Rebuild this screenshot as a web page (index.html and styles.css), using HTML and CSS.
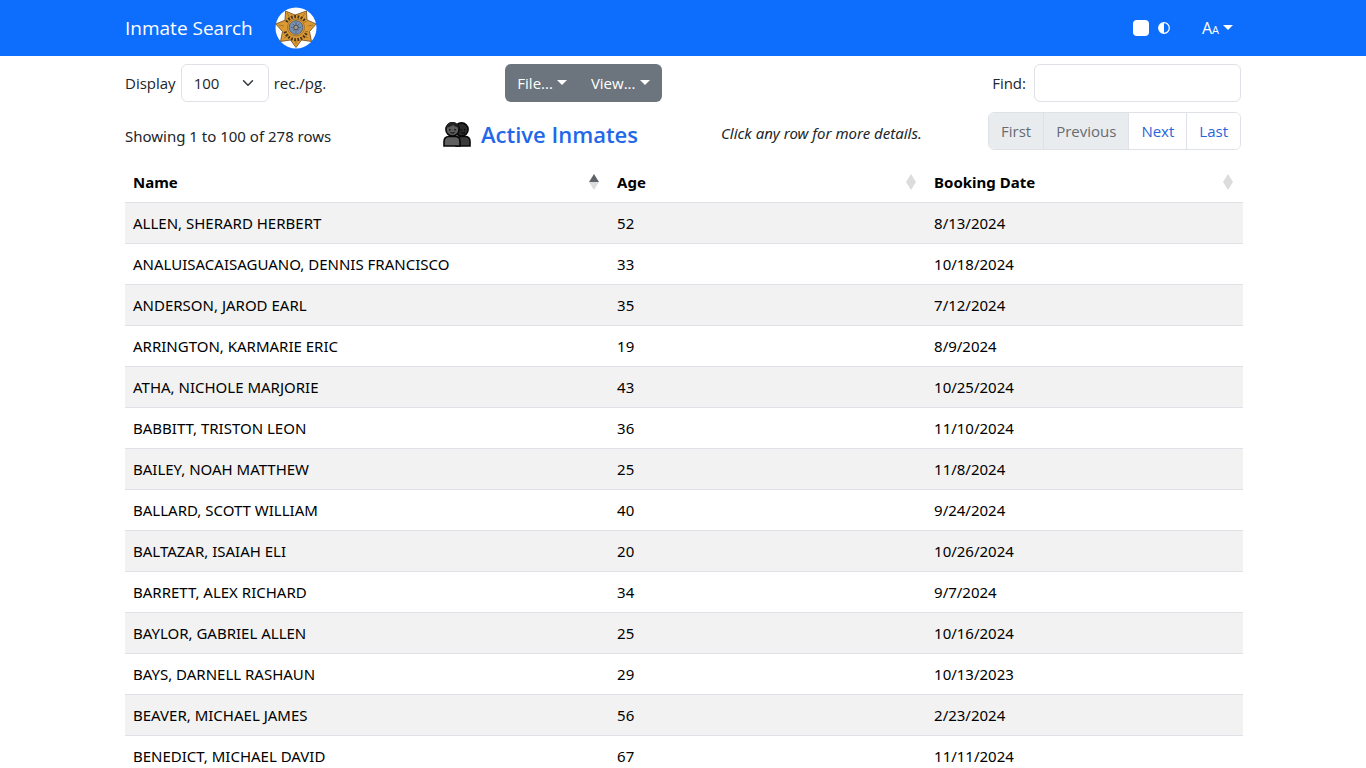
FILE: index.html
```html
<!DOCTYPE html>
<html lang="en">
<head>
<meta charset="utf-8">
<meta name="viewport" content="width=device-width, initial-scale=1">
<title>Inmate Search</title>
<link rel="stylesheet" href="styles.css">
</head>
<body>
<header class="navbar">
  <div class="container navbar-inner">
    <a class="brand" href="#">Inmate Search</a>
    <a class="badge-link" href="#" aria-label="Sheriff home">
      <svg class="badge" viewBox="0 0 42 42" aria-hidden="true">
        <circle cx="21" cy="21" r="20.5" fill="#fff"/>
        <path d="M21 40.500 15.500 33 5.500 34.500 7.500 24.500.8 17 10 13.200 10.500 4 20 8 31.500 4 32 13 41.200 17 34.500 24.500 36.500 34.500 26.500 33Z" fill="#dc9a32" stroke="#6b481c" stroke-width=".8"/>
        <path d="M21 37v-4M9 31l5-3M4 18l5 1M12 6l3 5M30 6l-3 5M38 18l-5 1M33 31l-5-3" stroke="#9b6a28" stroke-width=".8"/>
        <path d="M11.500 15a11 11 0 0 1 19 0" fill="none" stroke="#423221" stroke-width="3" stroke-dasharray="1.700 1.500"/>
        <path d="M10 24.500a11.500 11.500 0 0 0 22 0" fill="none" stroke="#423221" stroke-width="3" stroke-dasharray="1.700 1.500"/>
        <circle cx="21" cy="20.500" r="8.500" fill="#e0a13a" stroke="#8a6228" stroke-width=".7"/>
        <circle cx="21" cy="20.500" r="6.800" fill="#7890b0" stroke="#46566b" stroke-width=".8"/>
        <path d="M21 15v11M16 20.500h10M18 17l6 7M24 17l-6 7" stroke="#4a5d7a" stroke-width=".8"/>
        <circle cx="21" cy="20.500" r="2.200" fill="#a79b84" stroke="#37383b" stroke-width=".7"/>
      </svg>
    </a>
    <div class="nav-tools">
      <label class="theme"><input class="theme-box" type="checkbox" aria-label="Toggle dark theme">
        <svg class="contrast" viewBox="0 0 12 12" aria-hidden="true"><circle cx="6" cy="6" r="5.3" fill="none" stroke="#fff" stroke-width="1.2"/><path d="M6 .7a5.3 5.3 0 0 0 0 10.6Z" fill="#fff"/></svg>
      </label>
      <button class="text-size caret" type="button" aria-label="Text size">Aa</button>
    </div>
  </div>
</header>
<main class="container">
  <div class="toolbar">
    <div class="length"><label for="len">Display</label><select id="len"><option>100</option></select><span>rec./pg.</span></div>
    <div class="btn-group">
      <button class="caret" type="button">File...</button>
      <button class="caret" type="button">View...</button>
    </div>
    <div class="find"><label for="find">Find:</label><input id="find" type="search"></div>
  </div>
  <div class="summary">
    <div class="info">Showing 1 to 100 of 278 rows</div>
    <h1 class="title">
      <svg class="people" viewBox="0 0 28 26" aria-hidden="true">
        <path d="M13 25v-4c0-4 2-5.500 5-5.500h4c3.500 0 5 2 5 5V25Z" fill="#3a3a3a" stroke="#080808" stroke-width="1.600"/>
        <circle cx="18.500" cy="8.500" r="6.600" fill="#292929" stroke="#080808" stroke-width="1.600"/>
        <path d="M1 25v-4c0-4 2-5.500 5-5.500h6c3.500 0 5 2 5 5V25Z" fill="#606060" stroke="#080808" stroke-width="1.600"/>
        <circle cx="9.500" cy="8.500" r="6.600" fill="#5c5c5c" stroke="#080808" stroke-width="1.600"/>
        <path d="M3 7c1-5 4-6 6.500-6S15 3 16 7c-3-1-4-1.500-6-3-2 1.500-4 2-7 3Z" fill="#222"/>
        <path d="M6.800 8v1.500M12 8v1.500M18 8v1.500M21.500 8v1.500" stroke="#050505" stroke-width="1.300"/>
        <path d="M7.500 11.500q2 1.300 4 0M18 11.500q2 1.300 4 0" fill="none" stroke="#050505"/>
      </svg>
      <span>Active Inmates</span>
    </h1>
    <em class="hint">Click any row for more details.</em>
    <nav class="pager" aria-label="Pages">
      <button type="button" disabled>First</button><button type="button" disabled>Previous</button><button type="button">Next</button><button type="button">Last</button>
    </nav>
  </div>
  <table class="inmates">
    <colgroup><col class="col-name"><col class="col-age"><col class="col-date"></colgroup>
    <thead>
      <tr>
        <th aria-sort="ascending"><div class="head">Name<svg class="sort sorted" viewBox="0 0 10 16" aria-hidden="true"><path d="M0 8 5 0l5 8Z"/><path d="M0 8h10L5 16Z"/></svg></div></th>
        <th><div class="head">Age<svg class="sort" viewBox="0 0 10 16" aria-hidden="true"><path d="M0 8 5 0l5 8Z"/><path d="M0 8h10L5 16Z"/></svg></div></th>
        <th><div class="head">Booking Date<svg class="sort" viewBox="0 0 10 16" aria-hidden="true"><path d="M0 8 5 0l5 8Z"/><path d="M0 8h10L5 16Z"/></svg></div></th>
      </tr>
    </thead>
    <tbody>
      <tr><td>ALLEN, SHERARD HERBERT</td><td>52</td><td>8/13/2024</td></tr>
      <tr><td>ANALUISACAISAGUANO, DENNIS FRANCISCO</td><td>33</td><td>10/18/2024</td></tr>
      <tr><td>ANDERSON, JAROD EARL</td><td>35</td><td>7/12/2024</td></tr>
      <tr><td>ARRINGTON, KARMARIE ERIC</td><td>19</td><td>8/9/2024</td></tr>
      <tr><td>ATHA, NICHOLE MARJORIE</td><td>43</td><td>10/25/2024</td></tr>
      <tr><td>BABBITT, TRISTON LEON</td><td>36</td><td>11/10/2024</td></tr>
      <tr><td>BAILEY, NOAH MATTHEW</td><td>25</td><td>11/8/2024</td></tr>
      <tr><td>BALLARD, SCOTT WILLIAM</td><td>40</td><td>9/24/2024</td></tr>
      <tr><td>BALTAZAR, ISAIAH ELI</td><td>20</td><td>10/26/2024</td></tr>
      <tr><td>BARRETT, ALEX RICHARD</td><td>34</td><td>9/7/2024</td></tr>
      <tr><td>BAYLOR, GABRIEL ALLEN</td><td>25</td><td>10/16/2024</td></tr>
      <tr><td>BAYS, DARNELL RASHAUN</td><td>29</td><td>10/13/2023</td></tr>
      <tr><td>BEAVER, MICHAEL JAMES</td><td>56</td><td>2/23/2024</td></tr>
      <tr><td>BENEDICT, MICHAEL DAVID</td><td>67</td><td>11/11/2024</td></tr>
    </tbody>
  </table>
</main>
</body>
</html>
```
FILE: styles.css
```css
* { box-sizing: border-box; }

body {
  margin: 0;
  background: #fff;
  color: #212529;
  font-family: "Segoe UI", "Open Sans", "Noto Sans", sans-serif;
  font-size: 15px;
  line-height: 24px;
}

button, input, select { font: inherit; color: inherit; }

.container {
  width: 100%;
  max-width: 1140px;
  margin: 0 auto;
  padding: 0 12px;
}

.navbar { background: #0d6efd; color: #fff; }
.navbar-inner { display: flex; align-items: center; min-height: 56px; gap: 22px; }
.brand { color: #fff; font-size: 19px; text-decoration: none; }
.badge { display: block; width: 42px; height: 42px; }
.nav-tools { display: flex; align-items: center; gap: 32px; margin-left: auto; padding-right: 8px; }
.theme { display: flex; align-items: center; gap: 9px; }
.theme-box {
  appearance: none;
  width: 16px;
  height: 16px;
  margin: 0;
  border-radius: 4px;
  background: #fff;
}
.contrast { width: 12px; height: 12px; }
.text-size { padding: 0; border: 0; background: none; font-variant: small-caps; font-size: 16px; font-weight: 500; }

.caret::after {
  content: "";
  display: inline-block;
  margin-left: 4px;
  vertical-align: 4px;
  border: 5px solid transparent;
  border-top-color: currentColor;
  border-bottom: 0;
}

.toolbar {
  display: grid;
  grid-template-columns: 380fr auto 579fr;
  align-items: center;
  padding-top: 8px;
}
.length { display: flex; align-items: center; gap: 5px; }
.length select {
  width: 88px;
  height: 38px;
  padding: 0 12px;
  border: 1px solid #dee2e6;
  border-radius: 6px;
  appearance: none;
  background: #fff url("data:image/svg+xml,%3Csvg xmlns='http://www.w3.org/2000/svg' viewBox='0 0 16 16'%3E%3Cpath fill='none' stroke='%23343a40' stroke-linecap='round' stroke-linejoin='round' stroke-width='2' d='m2 5 6 6 6-6'/%3E%3C/svg%3E") no-repeat right 14px center / 12px;
}
.btn-group { display: flex; border-radius: 6px; background: #6c757d; }
.btn-group button { height: 38px; padding: 0 12px; border: 0; background: none; color: #fff; }
.find { display: flex; align-items: center; justify-content: flex-end; gap: 8px; }
.find input {
  width: 207px;
  height: 38px;
  padding: 0 12px;
  border: 1px solid #dee2e6;
  border-radius: 6px;
  background: #fff;
}

.summary {
  display: grid;
  grid-template-columns: 318fr 278fr 267fr auto;
  align-items: center;
  padding: 10px 0 12px;
}
.info { padding-top: 10px; }
.info, .hint, .inmates { font-family: "Segoe UI", "Noto Sans", "Open Sans", sans-serif; }
.title {
  display: flex;
  align-items: center;
  gap: 10px;
  margin: 0;
  padding-top: 6px;
  color: #2268e8;
  font-size: 22px;
  font-weight: 600;
  line-height: 30px;
}
.people { width: 28px; height: 26px; }
.hint { padding-top: 4px; }
.pager { display: flex; border: 1px solid #dee2e6; border-radius: 6px; overflow: hidden; }
.pager button {
  height: 36px;
  padding: 0 12px;
  border: 0;
  border-left: 1px solid #dee2e6;
  background: #fff;
  color: #2466dc;
}
.pager button:first-child { border-left: 0; }
.pager button:disabled { background: #e9ecef; color: #666b70; }

.inmates {
  width: calc(100% + 2px);
  table-layout: fixed;
  border-collapse: collapse;
  color: #000;
}
.col-name { width: 43.3%; }
.inmates th, .inmates td { padding: 8px; border-bottom: 1px solid #dee2e6; text-align: left; }
.inmates th { font-weight: 700; }
.inmates tbody tr:nth-child(odd) { background: #f2f2f2; }
.head { display: flex; align-items: center; justify-content: space-between; }
.sort { width: 10px; height: 16px; margin-right: 2px; fill: #dcdcdc; }
.sorted path:first-child { fill: #60646a; }
```
